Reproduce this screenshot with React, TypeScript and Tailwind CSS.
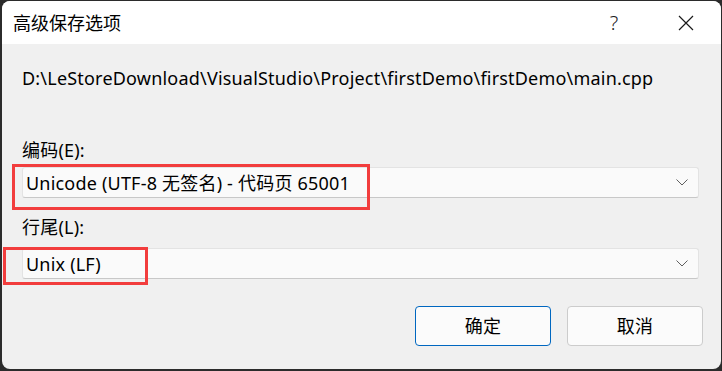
export default function App() {
  const font = { fontFamily: '"Noto Sans", "Noto Sans CJK SC", sans-serif' };
  return (
    <div className="w-[722px] h-[371px] bg-[#2b2b2b] pl-[2px] pt-[1px] pr-[1px] pb-[2px]" style={font}>
      <div className="relative w-full h-full bg-[#f0f0f0] rounded-[8px] overflow-hidden flex flex-col text-[18px] text-black tracking-[0.2px]">
        <div className="h-[43px] shrink-0 bg-white flex items-center pl-[11px]">
          <span className="leading-[24px] tracking-normal">高级保存选项</span>
          <div className="ml-auto flex items-center h-full">
            <div className="w-[40px] mr-[17px] flex items-center justify-center text-[20px] font-light text-[#222]">?</div>
            <div className="w-[70px] flex items-center justify-center">
              <svg width="16" height="16" viewBox="0 0 16 16">
                <path d="M1 1 L15 15 M15 1 L1 15" stroke="#1a1a1a" strokeWidth="1.2" fill="none" />
              </svg>
            </div>
          </div>
        </div>
        <div className="flex flex-col pl-[20px] pr-[22px]">
          <div className="mt-[22px] leading-[24px] h-[24px]">D:\LeStoreDownload\VisualStudio\Project\firstDemo\firstDemo\main.cpp</div>
          <div className="mt-[48px] leading-[24px] h-[24px]">编码(E):</div>
          <div className="mt-[5px] h-[31px] bg-[#fafafa] border border-[#e3e3e3] border-b-[#c8c8c8] rounded-[3px] flex items-center pl-[3px] pr-[10px]">
            <span className="leading-[24px]">Unicode (UTF-8 无签名) - 代码页 65001</span>
            <svg className="ml-auto" width="12" height="7" viewBox="0 0 12 7">
              <path d="M0.5 0.5 L6 6 L11.5 0.5" stroke="#5f5f5f" strokeWidth="1" fill="none" />
            </svg>
          </div>
          <div className="mt-[17px] leading-[24px] h-[24px]">行尾(L):</div>
          <div className="mt-[9px] h-[31px] bg-[#fafafa] border border-[#e3e3e3] border-b-[#c8c8c8] rounded-[3px] flex items-center pl-[3px] pr-[10px]">
            <span className="leading-[24px]">Unix (LF)</span>
            <svg className="ml-auto" width="12" height="7" viewBox="0 0 12 7">
              <path d="M0.5 0.5 L6 6 L11.5 0.5" stroke="#5f5f5f" strokeWidth="1" fill="none" />
            </svg>
          </div>
        </div>
        <div className="mt-[27px] flex justify-end gap-[16px] pr-[18px]">
          <button className="w-[136px] h-[40px] rounded-[4px] border border-[#0067c0] bg-[#fbfbfb] leading-[24px]">确定</button>
          <button className="w-[136px] h-[40px] rounded-[4px] border border-[#cccccc] bg-[#fbfbfb] leading-[24px]">取消</button>
        </div>
        <div className="absolute left-[10px] top-[163px] w-[358px] h-[46px] border-[3px] border-[#f23d3d]" />
        <div className="absolute left-[1px] top-[246px] w-[145px] h-[38px] border-[3px] border-[#f23d3d]" />
      </div>
    </div>
  );
}
